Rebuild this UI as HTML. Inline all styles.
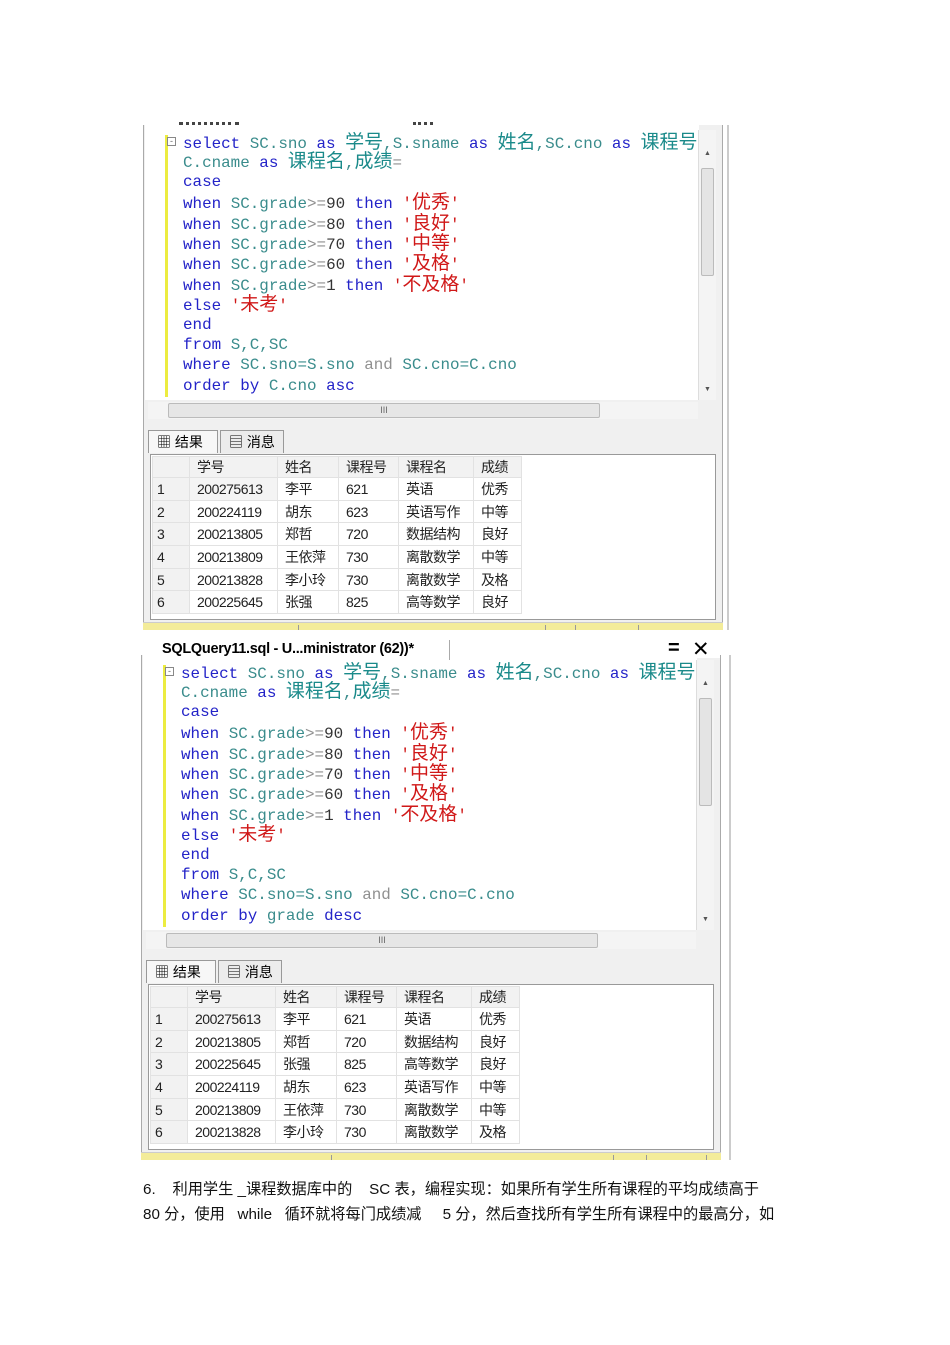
<!DOCTYPE html>
<html><head><meta charset="utf-8"><style>
*{margin:0;padding:0;box-sizing:border-box}
body{width:950px;height:1345px;background:#fff;position:relative;overflow:hidden;font-family:"Liberation Sans","Noto Sans CJK SC",sans-serif}
.blk{position:absolute;width:600px;height:520px}
.frame{position:absolute;left:0;top:0;width:580px;height:497px;border-left:1px solid #aaa;border-right:1px solid #aaa;background:#f0f0f0}
.ed{position:absolute;left:2px;top:0;width:554px;height:275px;background:#fff}
.yb{position:absolute;left:22px;top:10px;width:3px;height:262px;background:#ecec40}
.code{position:absolute;left:40px;top:6px;font-family:"Liberation Mono",monospace;font-size:15.9px;color:#3a8c8c}
.code div{height:20.4px;line-height:20.4px;white-space:pre;overflow:visible;position:relative}
.code div.z{top:2px}
.code div.z1{top:3px}
.code span{line-height:0}
.k{color:#2323c8}.s{color:#d01818}.g{color:#909090}
.c{font-family:"Noto Sans CJK SC",sans-serif;font-size:19px;color:#1a8a8a}
.cs{font-family:"Noto Sans CJK SC",sans-serif;font-size:19px;color:#d01818}
.box{position:absolute;left:24px;top:12px;width:9px;height:9px;border:1px solid #888;font-size:9px;line-height:7px;text-align:center;color:#666}
.vs{position:absolute;left:555px;top:5px;width:18px;height:270px;background:#f4f4f4;border-left:1px solid #ddd}
.vs:before{content:"▲";position:absolute;left:5px;top:20px;font-size:7px;color:#555}
.vs:after{content:"▼";position:absolute;left:5px;top:256px;font-size:7px;color:#555}
.vt{position:absolute;left:2px;top:38px;width:13px;height:108px;background:#e4e4e4;border:1px solid #bbb;border-radius:2px}
.hs{position:absolute;left:5px;top:277px;width:550px;height:17px;background:#f4f4f4}
.ht{position:absolute;left:20px;top:1px;width:432px;height:15px;background:#e6e6e6;border:1px solid #bbb;border-radius:2px;font-size:9px;text-align:center;color:#666;line-height:13px}
.tab{position:absolute;top:305px;height:23px;border:1px solid #999;border-bottom:none;background:#f7f7f7;font-size:14px;line-height:22px;padding-left:8px;white-space:nowrap}
.grid{position:absolute;left:7px;top:329px;width:566px;height:166px;border:1px solid #999;background:#fff}
table{position:absolute;left:1px;top:1px;border-collapse:collapse;font-size:14px;font-family:"Liberation Sans","Noto Sans CJK SC",sans-serif;letter-spacing:-0.5px}
td{height:22.7px;border:1px solid #e2e2e2;padding-left:7px;color:#222;white-space:nowrap}
tr:first-child td{background:#f2f2f2;height:21px}
td:first-child{background:#f2f2f2;padding-left:4px}
.ys{position:absolute;left:0;top:497px;width:580px;height:8px;background:#f3ec9a;border-top:1px solid #ccc}
.ys i{position:absolute;top:2px;width:1px;height:5px;background:#999}
.rl{position:absolute;left:584px;top:0;width:2px;height:505px;background:#ccc}
</style></head><body>

<!-- BLOCK 1 -->
<div class="blk" style="left:143px;top:125px">
<div class="frame"></div>
<div class="ed"></div>
<div style="position:absolute;left:36px;top:-3px;width:60px;height:4px;border-top:3px dotted #444"></div>
<div style="position:absolute;left:270px;top:-3px;width:20px;height:4px;border-top:3px dotted #444"></div>
<div class="yb"></div>
<div class="box">-</div>
<div class="code">
<div class="z1"><span class="k">select</span> SC.sno <span class="k">as</span> <span class="c">学号</span>,S.sname <span class="k">as</span> <span class="c">姓名</span>,SC.cno <span class="k">as</span> <span class="c">课程号</span></div>
<div class="z">C.cname <span class="k">as</span> <span class="c">课程名</span>,<span class="c">成绩</span><span class="g">=</span></div>
<div><span class="k">case</span></div>
<div class="z"><span class="k">when</span> SC.grade<span class="g">&gt;=</span><span style="color:#333">90</span> <span class="k">then</span> <span class="s">'</span><span class="cs">优秀</span><span class="s">'</span></div>
<div class="z"><span class="k">when</span> SC.grade<span class="g">&gt;=</span><span style="color:#333">80</span> <span class="k">then</span> <span class="s">'</span><span class="cs">良好</span><span class="s">'</span></div>
<div class="z"><span class="k">when</span> SC.grade<span class="g">&gt;=</span><span style="color:#333">70</span> <span class="k">then</span> <span class="s">'</span><span class="cs">中等</span><span class="s">'</span></div>
<div class="z"><span class="k">when</span> SC.grade<span class="g">&gt;=</span><span style="color:#333">60</span> <span class="k">then</span> <span class="s">'</span><span class="cs">及格</span><span class="s">'</span></div>
<div class="z"><span class="k">when</span> SC.grade<span class="g">&gt;=</span><span style="color:#333">1</span> <span class="k">then</span> <span class="s">'</span><span class="cs">不及格</span><span class="s">'</span></div>
<div class="z"><span class="k">else</span> <span class="s">'</span><span class="cs">未考</span><span class="s">'</span></div>
<div><span class="k">end</span></div>
<div><span class="k">from</span> S,C,SC</div>
<div><span class="k">where</span> SC.sno=S.sno <span class="g">and</span> SC.cno=C.cno</div>
<div><span class="k">order by</span> C.cno <span class="k">asc</span></div>
</div>
<div class="vs"><div class="vt"></div></div>
<div class="hs"><div class="ht">III</div></div>
<div class="tab" style="left:5px;width:70px">▦ 结果</div>
<div class="tab" style="left:77px;width:64px;background:#ececec">▤ 消息</div>
<div class="grid"><table>
<tr><td style="width:37px"></td><td style="width:88px">学号</td><td style="width:61px">姓名</td><td style="width:60px">课程号</td><td style="width:75px">课程名</td><td style="width:48px">成绩</td></tr>
<tr><td>1</td><td style="border:1px dotted #555;background:#f4f4f4">200275613</td><td>李平</td><td>621</td><td>英语</td><td>优秀</td></tr>
<tr><td>2</td><td>200224119</td><td>胡东</td><td>623</td><td>英语写作</td><td>中等</td></tr>
<tr><td>3</td><td>200213805</td><td>郑哲</td><td>720</td><td>数据结构</td><td>良好</td></tr>
<tr><td>4</td><td>200213809</td><td>王依萍</td><td>730</td><td>离散数学</td><td>中等</td></tr>
<tr><td>5</td><td>200213828</td><td>李小玲</td><td>730</td><td>离散数学</td><td>及格</td></tr>
<tr><td>6</td><td>200225645</td><td>张强</td><td>825</td><td>高等数学</td><td>良好</td></tr>
</table></div>
<div class="ys"><i style="left:155px"></i><i style="left:402px"></i><i style="left:432px"></i><i style="left:495px"></i></div>
<div class="rl"></div>
</div>

<!-- BLOCK 2 -->
<div class="blk" style="left:141px;top:655px">
<div class="frame"></div>
<div class="ed"></div>
<div class="yb"></div>
<div class="box">-</div>
<div class="code">
<div class="z1"><span class="k">select</span> SC.sno <span class="k">as</span> <span class="c">学号</span>,S.sname <span class="k">as</span> <span class="c">姓名</span>,SC.cno <span class="k">as</span> <span class="c">课程号</span></div>
<div class="z">C.cname <span class="k">as</span> <span class="c">课程名</span>,<span class="c">成绩</span><span class="g">=</span></div>
<div><span class="k">case</span></div>
<div class="z"><span class="k">when</span> SC.grade<span class="g">&gt;=</span><span style="color:#333">90</span> <span class="k">then</span> <span class="s">'</span><span class="cs">优秀</span><span class="s">'</span></div>
<div class="z"><span class="k">when</span> SC.grade<span class="g">&gt;=</span><span style="color:#333">80</span> <span class="k">then</span> <span class="s">'</span><span class="cs">良好</span><span class="s">'</span></div>
<div class="z"><span class="k">when</span> SC.grade<span class="g">&gt;=</span><span style="color:#333">70</span> <span class="k">then</span> <span class="s">'</span><span class="cs">中等</span><span class="s">'</span></div>
<div class="z"><span class="k">when</span> SC.grade<span class="g">&gt;=</span><span style="color:#333">60</span> <span class="k">then</span> <span class="s">'</span><span class="cs">及格</span><span class="s">'</span></div>
<div class="z"><span class="k">when</span> SC.grade<span class="g">&gt;=</span><span style="color:#333">1</span> <span class="k">then</span> <span class="s">'</span><span class="cs">不及格</span><span class="s">'</span></div>
<div class="z"><span class="k">else</span> <span class="s">'</span><span class="cs">未考</span><span class="s">'</span></div>
<div><span class="k">end</span></div>
<div><span class="k">from</span> S,C,SC</div>
<div><span class="k">where</span> SC.sno=S.sno <span class="g">and</span> SC.cno=C.cno</div>
<div><span class="k">order by</span> grade <span class="k">desc</span></div>
</div>
<div class="vs"><div class="vt"></div></div>
<div class="hs"><div class="ht">III</div></div>
<div class="tab" style="left:5px;width:70px">▦ 结果</div>
<div class="tab" style="left:77px;width:64px;background:#ececec">▤ 消息</div>
<div class="grid"><table>
<tr><td style="width:37px"></td><td style="width:88px">学号</td><td style="width:61px">姓名</td><td style="width:60px">课程号</td><td style="width:75px">课程名</td><td style="width:48px">成绩</td></tr>
<tr><td>1</td><td style="border:1px dotted #555;background:#f4f4f4">200275613</td><td>李平</td><td>621</td><td>英语</td><td>优秀</td></tr>
<tr><td>2</td><td>200213805</td><td>郑哲</td><td>720</td><td>数据结构</td><td>良好</td></tr>
<tr><td>3</td><td>200225645</td><td>张强</td><td>825</td><td>高等数学</td><td>良好</td></tr>
<tr><td>4</td><td>200224119</td><td>胡东</td><td>623</td><td>英语写作</td><td>中等</td></tr>
<tr><td>5</td><td>200213809</td><td>王依萍</td><td>730</td><td>离散数学</td><td>中等</td></tr>
<tr><td>6</td><td>200213828</td><td>李小玲</td><td>730</td><td>离散数学</td><td>及格</td></tr>
</table></div>
<div class="ys"><i style="left:190px"></i><i style="left:472px"></i><i style="left:505px"></i><i style="left:565px"></i></div>
<div class="rl" style="left:588px"></div>
</div>
<div style="position:absolute;left:150px;top:640px;width:570px;height:18px;background:#fff;z-index:5"></div>
<div style="position:absolute;left:150px;top:640px;width:300px;height:20px;font-weight:bold;font-size:14.5px;line-height:19px;padding-left:12px;border-right:1px solid #aaa;letter-spacing:-0.3px;z-index:6;background:#fff">SQLQuery11.sql - U...ministrator (62))*</div>
<div style="position:absolute;left:668px;top:637px;font-size:20px;font-weight:bold;z-index:6">=</div>
<div style="position:absolute;left:692px;top:637px;font-size:21px;z-index:6">✕</div>

<div style="position:absolute;left:143px;top:1177px;font-size:15.2px;line-height:25px;color:#111;white-space:pre">6.    利用学生 _课程数据库中的    SC 表，编程实现：如果所有学生所有课程的平均成绩高于
80 分，使用   while   循环就将每门成绩减     5 分，然后查找所有学生所有课程中的最高分，如</div>
</body></html>
